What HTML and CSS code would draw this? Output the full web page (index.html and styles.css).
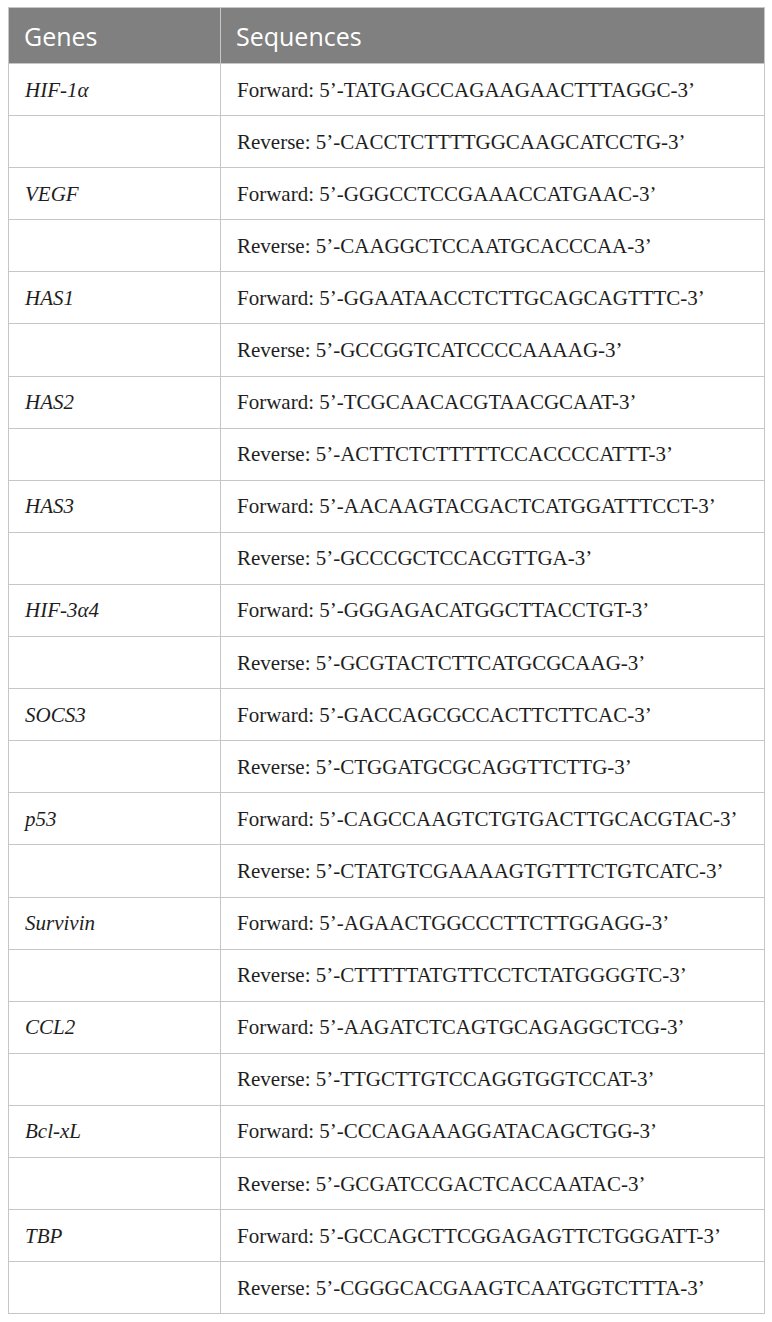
FILE: index.html
```html
<!DOCTYPE html>
<html>
<head>
<meta charset="utf-8">
<link rel="stylesheet" href="styles.css">
</head>
<body>
<table class="primers">
<thead>
<tr><th class="col-gene">Genes</th><th>Sequences</th></tr>
</thead>
<tbody>
<tr><td class="gene">HIF-1α</td><td>Forward: 5’-TATGAGCCAGAAGAACTTTAGGC-3’</td></tr>
<tr><td></td><td>Reverse: 5’-CACCTCTTTTGGCAAGCATCCTG-3’</td></tr>
<tr><td class="gene">VEGF</td><td>Forward: 5’-GGGCCTCCGAAACCATGAAC-3’</td></tr>
<tr><td></td><td>Reverse: 5’-CAAGGCTCCAATGCACCCAA-3’</td></tr>
<tr><td class="gene">HAS1</td><td>Forward: 5’-GGAATAACCTCTTGCAGCAGTTTC-3’</td></tr>
<tr><td></td><td>Reverse: 5’-GCCGGTCATCCCCAAAAG-3’</td></tr>
<tr><td class="gene">HAS2</td><td>Forward: 5’-TCGCAACACGTAACGCAAT-3’</td></tr>
<tr><td></td><td>Reverse: 5’-ACTTCTCTTTTTCCACCCCATTT-3’</td></tr>
<tr><td class="gene">HAS3</td><td>Forward: 5’-AACAAGTACGACTCATGGATTTCCT-3’</td></tr>
<tr><td></td><td>Reverse: 5’-GCCCGCTCCACGTTGA-3’</td></tr>
<tr><td class="gene">HIF-3α4</td><td>Forward: 5’-GGGAGACATGGCTTACCTGT-3’</td></tr>
<tr><td></td><td>Reverse: 5’-GCGTACTCTTCATGCGCAAG-3’</td></tr>
<tr><td class="gene">SOCS3</td><td>Forward: 5’-GACCAGCGCCACTTCTTCAC-3’</td></tr>
<tr><td></td><td>Reverse: 5’-CTGGATGCGCAGGTTCTTG-3’</td></tr>
<tr><td class="gene">p53</td><td>Forward: 5’-CAGCCAAGTCTGTGACTTGCACGTAC-3’</td></tr>
<tr><td></td><td>Reverse: 5’-CTATGTCGAAAAGTGTTTCTGTCATC-3’</td></tr>
<tr><td class="gene">Survivin</td><td>Forward: 5’-AGAACTGGCCCTTCTTGGAGG-3’</td></tr>
<tr><td></td><td>Reverse: 5’-CTTTTTATGTTCCTCTATGGGGTC-3’</td></tr>
<tr><td class="gene">CCL2</td><td>Forward: 5’-AAGATCTCAGTGCAGAGGCTCG-3’</td></tr>
<tr><td></td><td>Reverse: 5’-TTGCTTGTCCAGGTGGTCCAT-3’</td></tr>
<tr><td class="gene">Bcl-xL</td><td>Forward: 5’-CCCAGAAAGGATACAGCTGG-3’</td></tr>
<tr><td></td><td>Reverse: 5’-GCGATCCGACTCACCAATAC-3’</td></tr>
<tr><td class="gene">TBP</td><td>Forward: 5’-GCCAGCTTCGGAGAGTTCTGGGATT-3’</td></tr>
<tr><td></td><td>Reverse: 5’-CGGGCACGAAGTCAATGGTCTTTA-3’</td></tr>
</tbody>
</table>
</body>
</html>
```
FILE: styles.css
```css
html, body {
  margin: 0;
  padding: 0;
  background: #ffffff;
}
body {
  padding: 7px 7px 0 8px;
}
.primers {
  width: 757px;
  border-collapse: collapse;
  table-layout: fixed;
  font-family: "Liberation Serif", "Times New Roman", serif;
  color: #1e1e1e;
}
.primers th {
  background: #808080;
  color: #ffffff;
  font-family: "Open Sans", "Noto Sans", sans-serif;
  font-weight: 400;
  font-size: 25px;
  line-height: 30px;
  text-align: left;
  height: 55px;
  padding: 0 0 0 15px;
  border: 1px solid #c6c6c6;
}
.primers th.col-gene {
  width: 196px;
}
.primers td {
  height: 51.1px;
  padding: 0 0 0 16px;
  font-size: 21px;
  line-height: 24px;
  border: 1px solid #c6c6c6;
  white-space: nowrap;
}
.primers td.gene {
  font-style: italic;
}
```
